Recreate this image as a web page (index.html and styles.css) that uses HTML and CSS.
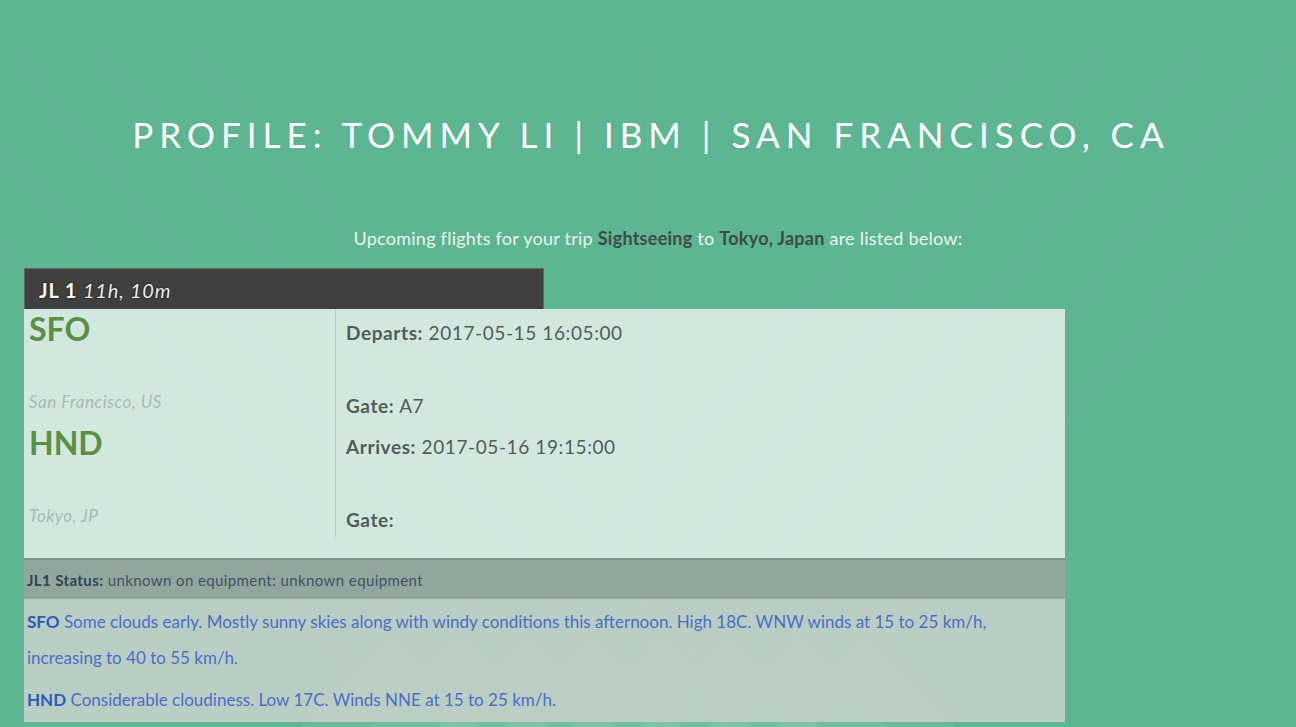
FILE: index.html
```html
<!DOCTYPE html>
<html lang="en">
<head>
<meta charset="utf-8">
<title>Profile: Tommy Li</title>
<link rel="stylesheet" href="styles.css">
</head>
<body>
<svg class="backdrop" width="1296" height="727" viewBox="0 0 1296 727" aria-hidden="true">
  <g class="lines">
    <line x1="17" y1="60" x2="577" y2="727"/>
    <line x1="107" y1="60" x2="667" y2="727"/>
    <line x1="198" y1="60" x2="758" y2="727"/>
    <line x1="-73" y1="60" x2="487" y2="727"/>
    <line x1="-163" y1="60" x2="397" y2="727"/>
    <line x1="648" y1="60" x2="648" y2="727"/>
    <line x1="1012" y1="60" x2="452" y2="727"/>
    <line x1="1100" y1="60" x2="540" y2="727"/>
    <line x1="1190" y1="60" x2="630" y2="727"/>
    <line x1="1281" y1="60" x2="721" y2="727"/>
    <line x1="1371" y1="60" x2="811" y2="727"/>
  </g>
  <g class="tris">
    <polygon points="300,727 390,637 480,727"/>
    <polygon points="370,727 460,637 550,727"/>
    <polygon points="437,727 527,637 617,727"/>
    <polygon points="503,727 593,637 683,727"/>
    <polygon points="572,727 662,637 752,727"/>
    <polygon points="640,727 730,637 820,727"/>
    <polygon points="708,727 798,637 888,727"/>
    <polygon points="776,727 866,637 956,727"/>
  </g>
</svg>
<main class="page">
  <h1 class="title">PROFILE: TOMMY LI | IBM | SAN FRANCISCO, CA</h1>
  <p class="intro">Upcoming flights for your trip <b>Sightseeing</b> to <b>Tokyo, Japan</b> are listed below:</p>

  <section class="flight">
    <div class="flight-head"><b>JL 1</b> <i>11h, 10m</i></div>
    <div class="flight-body">
      <div class="leg">
        <div class="airport">
          <div class="code">SFO</div>
          <div class="city">San Francisco, US</div>
        </div>
        <div class="times">
          <div class="row"><b>Departs:</b> 2017-05-15 16:05:00</div>
          <div class="row gate"><b>Gate:</b> A7</div>
        </div>
      </div>
      <div class="leg">
        <div class="airport">
          <div class="code">HND</div>
          <div class="city">Tokyo, JP</div>
        </div>
        <div class="times">
          <div class="row"><b>Arrives:</b> 2017-05-16 19:15:00</div>
          <div class="row gate"><b>Gate:</b></div>
        </div>
      </div>
    </div>
    <div class="status"><b>JL1 Status:</b> unknown on equipment: unknown equipment</div>
    <div class="weather">
      <p><b>SFO</b> <span>Some clouds early. Mostly sunny skies along with windy conditions this afternoon. High 18C. WNW winds at 15 to 25 km/h,</span> <span>increasing to 40 to 55 km/h.</span></p>
      <p><b>HND</b> Considerable cloudiness. Low 17C. Winds NNE at 15 to 25 km/h.</p>
    </div>
  </section>
</main>
</body>
</html>
```

FILE: styles.css
```css
html, body {
  margin: 0;
  padding: 0;
}

body {
  background: #5db592;
  font-family: Lato, "Open Sans", sans-serif;
  color: #ffffff;
  width: 1296px;
  height: 727px;
  overflow: hidden;
  position: relative;
}

.backdrop {
  position: absolute;
  left: 0;
  top: 0;
  z-index: 0;
}

.backdrop .lines line {
  stroke: rgba(255, 255, 255, 0.07);
  stroke-width: 1;
}

.backdrop .tris polygon {
  fill: rgba(255, 255, 255, 0.07);
}

.page {
  position: relative;
  z-index: 1;
  padding-top: 111px;
}

.title {
  margin: 0;
  padding-left: 6px;
  text-align: center;
  font-size: 35px;
  line-height: 46px;
  font-weight: 400;
  letter-spacing: 6px;
  color: #ffffff;
}

.intro {
  margin: 69px 0 0;
  padding-left: 20px;
  text-align: center;
  font-size: 18px;
  line-height: 24px;
  letter-spacing: 0.25px;
  color: #eaf5ef;
}

.intro b {
  color: #3f4b47;
  font-weight: 700;
}

.flight {
  margin: 18px 0 0 24px;
  width: 1041px;
}

.flight-head {
  box-sizing: border-box;
  width: 520px;
  height: 41px;
  background: #404040;
  border: 1px solid #5b6a62;
  border-bottom: none;
  padding: 8px 14px 0;
  font-size: 20px;
  line-height: 26px;
  letter-spacing: 0.8px;
  color: #ffffff;
  text-shadow: 0 0 2px #000;
}

.flight-head b {
  font-weight: 700;
}

.flight-head i {
  font-weight: 400;
  color: #eeeeee;
}

.flight-body {
  background: rgba(220, 236, 229, 0.93);
  padding-bottom: 21px;
}

.leg {
  display: grid;
  grid-template-columns: 312px 1fr;
  height: 114px;
}

.airport {
  border-right: 1px solid #b9cdc4;
  padding-left: 5px;
}

.code {
  font-size: 32px;
  line-height: 40px;
  font-weight: 700;
  color: #5b8f45;
}

.city {
  margin-top: 43px;
  font-size: 17px;
  line-height: 20px;
  letter-spacing: 0.5px;
  font-style: italic;
  color: #a9b8b1;
}

.times {
  padding: 12px 0 0 10px;
  font-size: 19px;
  line-height: 24px;
  letter-spacing: 0.6px;
  color: #4f5e57;
}

.times b {
  font-weight: 700;
}

.row.gate {
  margin-top: 49px;
}

.status {
  box-sizing: border-box;
  height: 41px;
  background: #93a69d;
  border-top: 2px solid #7e9088;
  padding: 10px 3px 0;
  font-size: 15px;
  line-height: 21px;
  letter-spacing: 0.4px;
  color: #3c5460;
}

.status b {
  color: #2b4557;
  font-weight: 700;
}

.weather {
  background: rgba(190, 206, 198, 0.96);
  padding: 5px 3px 4px;
  min-height: 112px;
  box-sizing: border-box;
}

.weather p {
  margin: 0 0 6px;
  font-size: 17px;
  line-height: 36px;
  color: #4a6ec6;
}

.weather p:last-child {
  margin-bottom: 0;
}

.weather b {
  font-weight: 700;
  color: #2f5bb8;
}
```
